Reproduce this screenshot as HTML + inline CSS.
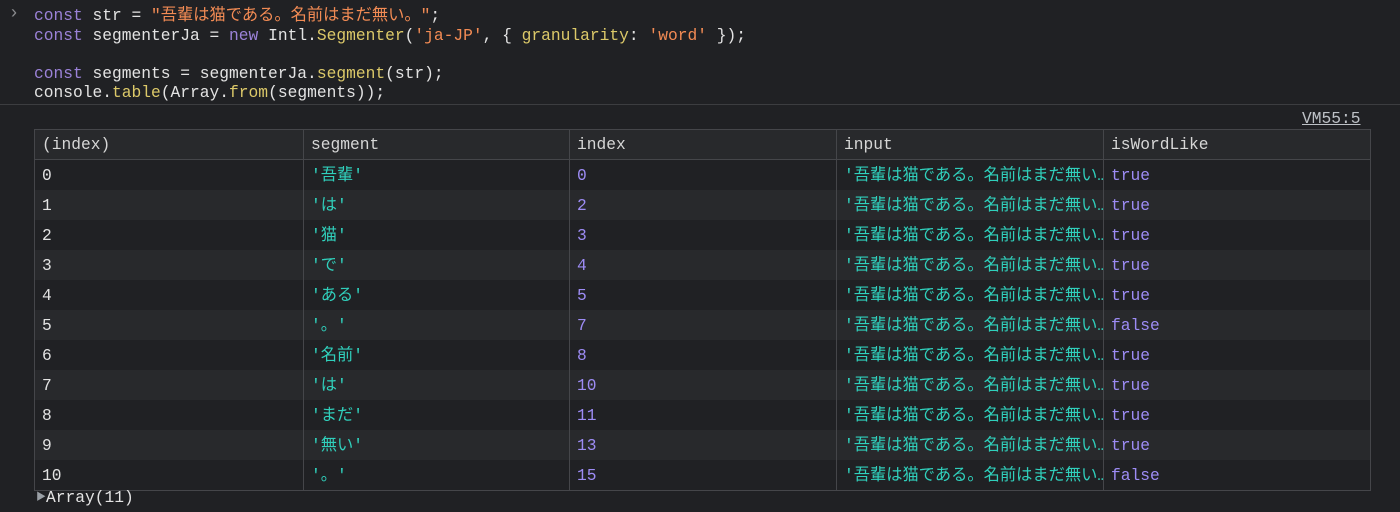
<!DOCTYPE html>
<html><head><meta charset="utf-8"><style>
body{margin:0;width:1400px;height:512px;background:#202124;overflow:hidden;font-family:"Liberation Mono","Noto Sans CJK JP",monospace;font-size:16.25px;color:#e3e3e3;position:relative}
.ln{position:absolute;left:34px;white-space:pre;line-height:20px}
.k{color:#9b82d8}.s{color:#f28b54}.f{color:#dcc969}.c{color:#30d0bc}.n{color:#9d8cf5}
.sep{position:absolute;left:0;right:0;top:104px;height:1px;background:#3c3d40}
.vm{position:absolute;left:1302px;top:109px;text-decoration:underline;color:#bdc1c6;line-height:20px}
table{position:absolute;left:34px;top:129px;border-collapse:collapse;table-layout:fixed;width:1336px;border:1px solid #45464a}
td,th{border-left:1px solid #45464a;border-right:1px solid #45464a;padding:2px 0 0 7px;text-align:left;font-weight:normal;white-space:nowrap;overflow:hidden;height:27.6px;line-height:28px}
th{height:29px;background:#28292c;color:#d6d6d6;border-bottom:1px solid #45464a;padding-top:0}
tr:nth-child(even) td{background:#28292c}
tr:nth-child(odd) td{background:#202124}
.arr{position:absolute;left:36px;top:488px;line-height:20px}
</style></head><body>
<div style="position:absolute;left:11px;top:2px;color:#8a8b8e;font-size:18px;font-family:'Liberation Sans',sans-serif">&#x203A;</div>
<div class="ln" style="top:6px"><span class="k">const</span> str = <span class="s">"吾輩は猫である。名前はまだ無い。"</span>;</div>
<div class="ln" style="top:26px"><span class="k">const</span> segmenterJa = <span class="k">new</span> Intl.<span class="f">Segmenter</span>(<span class="s">'ja-JP'</span>, { <span class="f">granularity</span>: <span class="s">'word'</span> });</div>
<div class="ln" style="top:64px"><span class="k">const</span> segments = segmenterJa.<span class="f">segment</span>(str);</div>
<div class="ln" style="top:83px">console.<span class="f">table</span>(Array.<span class="f">from</span>(segments));</div>
<div class="sep"></div>
<div class="vm">VM55:5</div>
<table>
<colgroup><col style="width:269px"><col style="width:266px"><col style="width:267px"><col style="width:267px"><col style="width:267px"></colgroup>
<thead><tr><th>(index)</th><th>segment</th><th>index</th><th>input</th><th>isWordLike</th></tr></thead>
<tbody>
<tr><td>0</td><td class="c">'吾輩'</td><td class="n">0</td><td class="c">'吾輩は猫である。名前はまだ無い…</td><td class="n">true</td></tr>
<tr><td>1</td><td class="c">'は'</td><td class="n">2</td><td class="c">'吾輩は猫である。名前はまだ無い…</td><td class="n">true</td></tr>
<tr><td>2</td><td class="c">'猫'</td><td class="n">3</td><td class="c">'吾輩は猫である。名前はまだ無い…</td><td class="n">true</td></tr>
<tr><td>3</td><td class="c">'で'</td><td class="n">4</td><td class="c">'吾輩は猫である。名前はまだ無い…</td><td class="n">true</td></tr>
<tr><td>4</td><td class="c">'ある'</td><td class="n">5</td><td class="c">'吾輩は猫である。名前はまだ無い…</td><td class="n">true</td></tr>
<tr><td>5</td><td class="c">'。'</td><td class="n">7</td><td class="c">'吾輩は猫である。名前はまだ無い…</td><td class="n">false</td></tr>
<tr><td>6</td><td class="c">'名前'</td><td class="n">8</td><td class="c">'吾輩は猫である。名前はまだ無い…</td><td class="n">true</td></tr>
<tr><td>7</td><td class="c">'は'</td><td class="n">10</td><td class="c">'吾輩は猫である。名前はまだ無い…</td><td class="n">true</td></tr>
<tr><td>8</td><td class="c">'まだ'</td><td class="n">11</td><td class="c">'吾輩は猫である。名前はまだ無い…</td><td class="n">true</td></tr>
<tr><td>9</td><td class="c">'無い'</td><td class="n">13</td><td class="c">'吾輩は猫である。名前はまだ無い…</td><td class="n">true</td></tr>
<tr><td>10</td><td class="c">'。'</td><td class="n">15</td><td class="c">'吾輩は猫である。名前はまだ無い…</td><td class="n">false</td></tr>
</tbody></table>
<div class="arr"><span style="color:#9aa0a6;font-size:10px;position:relative;top:-2px">&#9654;</span>Array(11)</div>
</body></html>
